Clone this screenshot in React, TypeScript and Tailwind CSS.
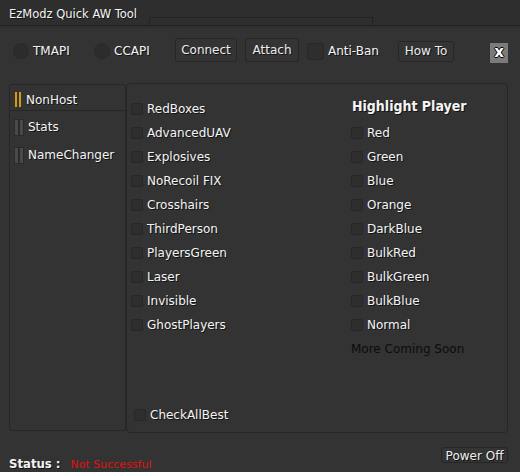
const font = "font-['DejaVu_Sans',Verdana,sans-serif]";
const bold = "font-['DejaVu_Sans_Condensed','DejaVu_Sans',sans-serif] font-bold";
const shadow = "[text-shadow:1px_1px_0_#141414]";

const nonHost = [
  "RedBoxes",
  "AdvancedUAV",
  "Explosives",
  "NoRecoil FIX",
  "Crosshairs",
  "ThirdPerson",
  "PlayersGreen",
  "Laser",
  "Invisible",
  "GhostPlayers",
];
const colours = ["Red", "Green", "Blue", "Orange", "DarkBlue", "BulkRed", "BulkGreen", "BulkBlue", "Normal"];

function Box({ big = false }: { big?: boolean }) {
  return (
    <span
      className={`block shrink-0 border border-[#272727] bg-[#2e2e2e] ${big ? "size-[17px] rounded-[3px]" : "size-3 rounded-[2px]"}`}
    />
  );
}

function Check({ label }: { label: string }) {
  return (
    <div className="flex h-6 items-center gap-[4px]">
      <Box />
      <span className={shadow}>{label}</span>
    </div>
  );
}

function Radio({ label }: { label: string }) {
  return (
    <div className="mt-[2px] flex w-[81px] items-center gap-[4px]">
      <span className="block size-4 rounded-full border border-[#2a2a2a] bg-[#2c2c2c]" />
      <span className={shadow}>{label}</span>
    </div>
  );
}

function Button({ label, className }: { label: string; className: string }) {
  return (
    <button
      type="button"
      className={`flex items-center justify-center rounded-[3px] border border-[#262626] bg-[#343434] text-[#ececec] ${shadow} ${className}`}
    >
      {label}
    </button>
  );
}

function NavItem({ label, active = false }: { label: string; active?: boolean }) {
  const bar = active ? "w-[2px] bg-[#d39c0c]" : "w-[3px] bg-[#4a4a4a] outline outline-[#2a2a2a]";
  return (
    <div className={`flex items-center pl-[5px] pt-[4px] ${active ? "h-[26px] border-b border-[#262626]" : "h-[28px]"}`}>
      <span className={`block h-[15px] ${bar}`} />
      <span className={`ml-[2px] block h-[15px] ${bar}`} />
      <span className={`ml-[5px] ${shadow}`}>{label}</span>
    </div>
  );
}

export default function App() {
  return (
    <div className={`flex h-[472px] w-[520px] flex-col overflow-hidden bg-[#333333] text-[12px] text-[#f4f4f4] ${font}`}>
      <div className="flex h-[25px] items-end bg-[#2e2e2e]">
        <span className={`w-[149px] self-center pl-[9px] pt-[4px] text-[11.5px] ${shadow}`}>EzModz Quick AW Tool</span>
        <span className="block h-[8px] w-[224px] border-x border-t border-[#222222]" />
      </div>
      <div className="h-[3px] border-t border-[#232323] bg-[#2e2e2e]" />

      <div className="mt-[9px] flex h-[25px] items-center pl-[13px]">
        <Radio label="TMAPI" />
        <Radio label="CCAPI" />
        <Button label="Connect" className="h-6 w-[62px]" />
        <Button label="Attach" className="ml-2 h-6 w-[54px]" />
        <div className="ml-2 mt-[3px] flex w-[91px] items-center gap-[4px]">
          <Box big />
          <span className={shadow}>Anti-Ban</span>
        </div>
        <Button label="How To" className="mt-[3px] h-[21px] w-[56px]" />
        <span className="ml-[36px] mt-[6px] flex h-5 w-[18px] items-center justify-center bg-[#7b7b7b] text-[15px] font-bold leading-none text-white [text-shadow:1px_0_0_#000,-1px_0_0_#000,0_1px_0_#000,0_-1px_0_#000]">
          x
        </span>
      </div>

      <div className="ml-[9px] mt-[21px] flex h-[350px]">
        <div className="mt-px h-[347px] w-[117px] rounded-[3px] border border-[#272727]">
          <NavItem label="NonHost" active />
          <NavItem label="Stats" />
          <NavItem label="NameChanger" />
        </div>
        <div className="flex w-[382px] flex-col rounded-[4px] border border-[#272727] pb-[5px] pl-[4px] pt-[13px]">
          <div className="grid grid-cols-[220px_1fr]">
            <div>
              {nonHost.map((l) => (
                <Check key={l} label={l} />
              ))}
            </div>
            <div>
              <div className={`flex h-6 items-center pb-[5px] pl-px text-[14px] ${bold} ${shadow}`}>Highlight Player</div>
              {colours.map((l) => (
                <Check key={l} label={l} />
              ))}
              <div className="flex h-6 items-center text-[#0c0c0c]">More Coming Soon</div>
            </div>
          </div>
          <div className="mt-auto pl-[3px]">
            <Check label="CheckAllBest" />
          </div>
        </div>
      </div>

      <div className="flex h-[39px] justify-between pl-[9px] pr-[12px]">
        <div className="flex items-baseline gap-[10px] self-end leading-[14px]">
          <span className={`text-[13px] ${bold} ${shadow}`}>Status :</span>
          <span className="text-[11px] text-[#e01212]">Not Successful</span>
        </div>
        <Button label="Power Off" className="mt-[14px] h-[16px] w-[67px] pt-px" />
      </div>
    </div>
  );
}
